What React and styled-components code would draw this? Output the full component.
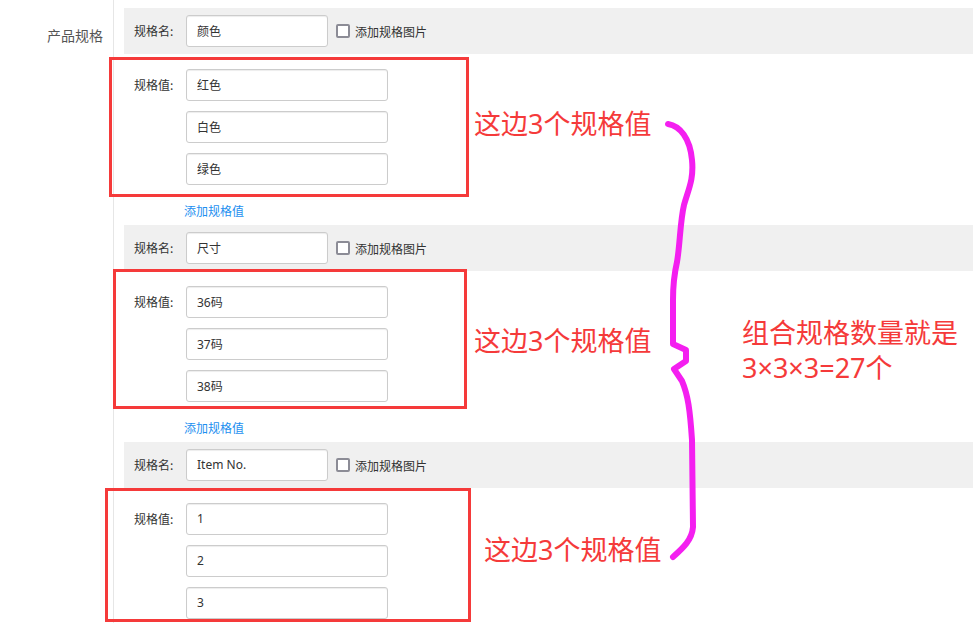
import React from "react";
import styled, { createGlobalStyle } from "styled-components";

const Global = createGlobalStyle`
  html, body {
    margin: 0;
    padding: 0;
    background: #fff;
  }
  body {
    font-family: "Noto Sans", "Noto Sans CJK SC", sans-serif;
    color: #333;
  }
`;

const Page = styled.div`
  position: relative;
  display: flex;
  width: 973px;
  height: 623px;
  overflow: hidden;
  background: #fff;
`;

const Side = styled.div`
  width: 103px;
  padding-right: 10px;
  border-right: 1px solid #e6e6e6;
  text-align: right;
  flex-shrink: 0;
`;

const SideLabel = styled.div`
  margin-top: 12px;
  line-height: 46px;
  font-size: 14px;
  color: #555;
  font-family: "Noto Sans CJK SC", sans-serif;
`;

const Main = styled.div`
  flex: 1;
  padding: 8px 0 0 10px;
`;

const Section = styled.div`
  display: flex;
  flex-direction: column;
`;

const NameRow = styled.div`
  display: flex;
  align-items: center;
  height: 46px;
  padding-left: 10px;
  background: #f0f0f0;
`;

const Label = styled.span`
  width: 52px;
  font-size: 12px;
  color: #333;
  font-family: "Noto Sans CJK SC", sans-serif;
  line-height: 32px;
`;

const Field = styled.input`
  box-sizing: border-box;
  width: ${(p) => p.$w}px;
  height: 32px;
  padding: 0 10px 1px;
  border: 1px solid #ccc;
  border-radius: 3px;
  box-shadow: inset 0 1px 1px rgba(0, 0, 0, 0.075);
  background: #fff;
  font-size: 12px;
  color: #333;
  font-family: "Noto Sans", "Noto Sans CJK SC", sans-serif;
  outline: none;
`;

const Check = styled.label`
  display: flex;
  align-items: center;
  margin-left: 8px;
  font-size: 12px;
  color: #333;
  font-family: "Noto Sans CJK SC", sans-serif;
`;

const Box = styled.span`
  box-sizing: border-box;
  width: 14px;
  height: 14px;
  border: 2px solid #8c8c96;
  border-radius: 2px;
  background: #fff;
  margin-right: 5px;
`;

const Values = styled.div`
  display: grid;
  grid-template-columns: 52px 202px;
  row-gap: 10px;
  padding: 15px 10px 0;
`;

const AddLink = styled.a`
  display: block;
  margin-left: 60px;
  padding-top: 16px;
  height: 24px;
  line-height: 20px;
  font-size: 12px;
  color: #1d8ff0;
  text-decoration: none;
  font-family: "Noto Sans CJK SC", sans-serif;
`;

const RedBox = styled.div`
  position: absolute;
  left: ${(p) => p.$x}px;
  top: ${(p) => p.$y}px;
  width: ${(p) => p.$w}px;
  height: ${(p) => p.$h}px;
  box-sizing: border-box;
  border: 3px solid #f53a3a;
  pointer-events: none;
`;

const Note = styled.div`
  position: absolute;
  left: ${(p) => p.$x}px;
  top: ${(p) => p.$y}px;
  font-size: 27px;
  line-height: 35px;
  color: #f53a3a;
  white-space: nowrap;
  font-family: "Noto Sans", "Noto Sans CJK SC", sans-serif;
`;

const Brace = styled.svg`
  position: absolute;
  left: 0;
  top: 0;
  pointer-events: none;
`;

const specs = [
  { name: "颜色", values: ["红色", "白色", "绿色"] },
  { name: "尺寸", values: ["36码", "37码", "38码"] },
  { name: "Item No.", values: ["1", "2", "3"] },
];

const Spec = ({ spec }) => (
  <Section>
    <NameRow>
      <Label>规格名:</Label>
      <Field $w={142} value={spec.name} readOnly />
      <Check>
        <Box />
        添加规格图片
      </Check>
    </NameRow>
    <Values>
      {spec.values.map((v, i) => (
        <React.Fragment key={v}>
          <Label>{i === 0 ? "规格值:" : ""}</Label>
          <Field $w={202} value={v} readOnly />
        </React.Fragment>
      ))}
    </Values>
    <AddLink href="#">添加规格值</AddLink>
  </Section>
);

export default function App() {
  return (
    <>
      <Global />
      <Page>
        <Side>
          <SideLabel>产品规格</SideLabel>
        </Side>
        <Main>
          {specs.map((s) => (
            <Spec key={s.name} spec={s} />
          ))}
        </Main>

        <RedBox $x={109} $y={57} $w={360} $h={140} />
        <RedBox $x={113} $y={269} $w={354} $h={140} />
        <RedBox $x={105} $y={488} $w={366} $h={134} />

        <Note $x={474} $y={106}>这边3个规格值</Note>
        <Note $x={474} $y={323}>这边3个规格值</Note>
        <Note $x={484} $y={532}>这边3个规格值</Note>
        <Note $x={742} $y={315}>组合规格数量就是</Note>
        <Note $x={742} $y={350}>3×3×3=27个</Note>

        <Brace width="973" height="623" viewBox="0 0 973 623">
          <path
            d="M668 124 C680 126 690 138 692 160 C694 180 688 190 684 205 C680 222 680 245 677 262 C674 275 673 285 673 300 L673 344 L686 350 L686 361 L674 369 L682 381 C688 395 690 410 692 440 L693 527 C692 540 683 548 673 557"
            fill="none"
            stroke="#f41ff0"
            strokeWidth="6"
            strokeLinecap="round"
            strokeLinejoin="round"
          />
        </Brace>
      </Page>
    </>
  );
}
